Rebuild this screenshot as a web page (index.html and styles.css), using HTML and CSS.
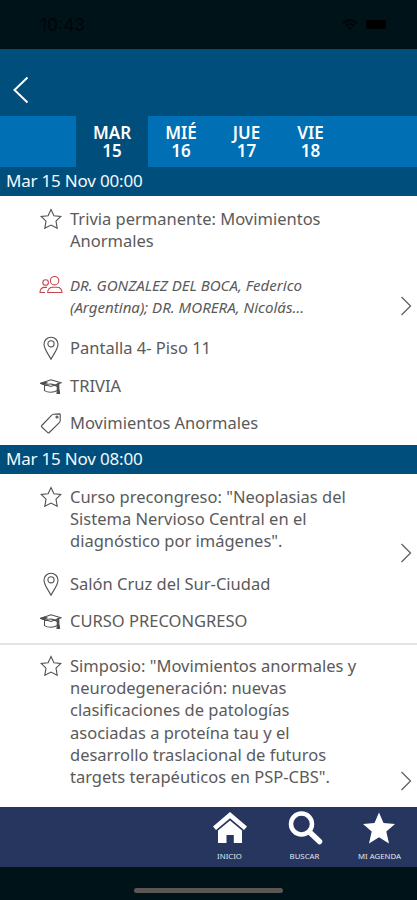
FILE: index.html
```
<!DOCTYPE html>
<html lang="es">
<head>
<meta charset="utf-8">
<title>Agenda</title>
<link rel="stylesheet" href="styles.css">
</head>
<body>
<svg class="defs" width="0" height="0" aria-hidden="true">
  <symbol id="star" viewBox="0 0 22 22"><path d="M11 1.6 13.9 7.7 20.8 8.5 16 13.2 17.2 20.2 11 17 4.8 20.2 6 13.2 1.2 8.5 8.1 7.7Z"/></symbol>
  <symbol id="pin" viewBox="0 0 22 24"><path d="M11 23.2C8.7 18.6 4 13 4 8.2a7 7 0 0 1 14 0C18 13 13.3 18.6 11 23.2Z"/><circle cx="11" cy="7.8" r="3.1"/></symbol>
  <symbol id="cap" viewBox="0 0 22 22"><path d="M.8 8.3 11 4.8 20.8 7.8 11 11.5ZM4.5 10v5.6C8 17.8 13.5 17.8 17.3 15.6V9.8M5 10.5C9 8 14 9 17 11.5"/><path class="solid" d="M1 8.3 5 7 7 8 3 9.3ZM17.8 8.5h1v5l.8 5h-2.6l.6-5Z"/></symbol>
  <symbol id="tag" viewBox="0 0 22 22"><path d="M1.800 13.500 11.500 3.300Q12.300 2.300 13.500 2.200L19.300 1.900Q20.200 1.900 20.200 2.800V8.500Q20.200 9.700 19.300 10.600L9.300 20.500Q8.400 21.300 7.500 20.400L1.800 15Q1 14.200 1.800 13.500Z"/><circle cx="17" cy="5" r="1"/></symbol>
  <symbol id="people" viewBox="0 0 24 22"><circle cx="15.6" cy="5.7" r="4.2"/><circle cx="6.600" cy="7.500" r="2.800"/><path d="M8.7 17.5C8.6 14 10.8 12.200 14 12.200h3.500c3.400 0 5.400 2 5.500 5.300ZM8 12.400H5.800C2.800 12.400 1 14 1 17.500h5"/></symbol>
</svg>
<header class="status">
  <span class="clock">10:43</span>
  <svg class="wifi" viewBox="0 0 16 12"><path d="M1 4.3Q8-2 15 4.3M3.5 7Q8 3 12.5 7"/><path class="dot" d="M5.5 8.5Q8 6.8 10.5 8.5L8 11.5Z"/></svg>
  <span class="battery"></span>
</header>
<div class="topbar"><svg class="back" viewBox="0 0 18 28"><path d="M15.500 1.500 2.500 14 15.500 26.500"/></svg></div>
<nav class="days">
  <div class="day active"><span>MAR</span><span>15</span></div>
  <div class="day mie"><span>MIÉ</span><span>16</span></div>
  <div class="day jue"><span>JUE</span><span>17</span></div>
  <div class="day vie"><span>VIE</span><span>18</span></div>
</nav>
<h2 class="date">Mar 15 Nov 00:00</h2>
<article class="item first">
  <div class="details">
    <div class="row"><svg class="icon"><use href="#star"/></svg><p>Trivia permanente: Movimientos<br>Anormales</p></div>
    <div class="row authors"><svg class="icon people"><use href="#people"/></svg><p>DR. GONZALEZ DEL BOCA, Federico<br>(Argentina); DR. MORERA, Nicolás…</p></div>
    <div class="row place"><svg class="icon pin"><use href="#pin"/></svg><p>Pantalla 4- Piso 11</p></div>
    <div class="row meta"><svg class="icon"><use href="#cap"/></svg><p>TRIVIA</p></div>
    <div class="row meta"><svg class="icon"><use href="#tag"/></svg><p>Movimientos Anormales</p></div>
  </div>
  <svg class="chevron" viewBox="0 0 12 20"><path d="M1.500 1 10.500 10 1.500 19"/></svg>
</article>
<h2 class="date">Mar 15 Nov 08:00</h2>
<article class="item second">
  <div class="details">
    <div class="row"><svg class="icon"><use href="#star"/></svg><p>Curso precongreso: "Neoplasias del<br>Sistema Nervioso Central en el<br>diagnóstico por imágenes".</p></div>
    <div class="row place"><svg class="icon pin"><use href="#pin"/></svg><p>Salón Cruz del Sur-Ciudad</p></div>
    <div class="row meta"><svg class="icon"><use href="#cap"/></svg><p>CURSO PRECONGRESO</p></div>
  </div>
  <svg class="chevron" viewBox="0 0 12 20"><path d="M1.500 1 10.500 10 1.500 19"/></svg>
</article>
<article class="item third">
  <div class="details">
    <div class="row"><svg class="icon"><use href="#star"/></svg><p>Simposio: "Movimientos anormales y<br>neurodegeneración: nuevas<br>clasificaciones de patologías<br>asociadas a proteína tau y el<br>desarrollo traslacional de futuros<br>targets terapéuticos en PSP-CBS".</p></div>
  </div>
  <svg class="chevron" viewBox="0 0 12 20"><path d="M1.500 1 10.500 10 1.500 19"/></svg>
</article>
<nav class="tabs">
  <div class="tab"><svg viewBox="0 0 36 34"><path d="M18 1 35 15.500 32 19 18 7.200 4 19 1 15.500ZM18 9.500 30 19.500V32H21.800V24H14.500V32H6V19.500Z"/></svg><span>INICIO</span></div>
  <div class="tab"><svg viewBox="0 0 36 34"><circle class="lens" cx="14.500" cy="13" r="10.500"/><path class="handle" d="M22.500 21 32.500 30.500"/></svg><span>BUSCAR</span></div>
  <div class="tab"><svg viewBox="0 0 36 34"><path d="M17 1.500 21.500 12 33 13 24.300 20.600 27 32.500 17 26.200 7 32.500 9.700 20.600 1 13 12.500 12Z"/></svg><span>MI AGENDA</span></div>
</nav>
<footer class="home"><span></span></footer>
</body>
</html>
```
FILE: styles.css
```
* { box-sizing: border-box; }
body { margin: 0; width: 417px; height: 900px; overflow: hidden; background: #fff; color: #5a5a5a; font-family: "Noto Sans", sans-serif; }
p, h2 { margin: 0; font-weight: 400; }
svg { display: block; flex: none; fill: none; }
.defs { position: absolute; }
.status { height: 49px; background: #001318; display: flex; align-items: center; padding: 0 31px 0 40px; color: #000609; }
.clock { font: 500 17px Inter, sans-serif; flex: 1; }
.wifi { width: 16px; height: 12px; stroke: #000609; stroke-width: 2; margin-right: 8px; }
.wifi .dot { fill: #000609; stroke: none; }
.battery { width: 20px; height: 9px; border-radius: 2px; background: #000; }
.topbar { height: 67px; background: #004e7b; padding: 27px 0 0 12px; }
.back { width: 18px; height: 28px; stroke: #fff; stroke-width: 2; }
.days { height: 51px; background: #006fb4; display: flex; padding-left: 76px; }
.day { display: flex; flex-direction: column; align-items: center; width: 66px; padding-top: 8px; color: #fff; font-size: 17px; font-weight: 600; line-height: 18px; }
.day.active { width: 72px; background: #004e7b; }
.day.jue { width: 65px; }
.day.vie { width: 63px; }
.date { height: 29px; background: #004e7b; color: #f4f8fb; font-size: 17px; line-height: 27px; padding-left: 6px; letter-spacing: -0.2px; }
.item { display: flex; padding-left: 40px; }
.details { flex: 1; }
.row { display: flex; font-size: 16.5px; font-weight: 300; line-height: 22.2px; gap: 8px; white-space: nowrap; }
.icon { width: 22px; height: 22px; stroke: #505050; stroke-width: 1.1; }
.solid { fill: #444; }
.pin { height: 24px; margin-top: -1px; }
.people { width: 24px; margin: 0 -1px; stroke: #c6454d; }
.authors { height: 44px; margin-top: 23px; font-size: 15.1px; line-height: 21.5px; font-style: italic; }
.chevron { width: 12px; height: 20px; stroke: #606060; stroke-width: 1.3; margin-right: 5px; }
.first { height: 249px; padding-top: 12px; }
.place { height: 22px; }
.first .place { margin-top: 17.6px; }
.meta { margin-top: 15.5px; }
.first .chevron { margin-top: 88px; }
.second { height: 171px; padding-top: 12px; border-bottom: 2px solid #e4e4e4; }
.second .place { margin-top: 20px; }
.second .chevron { margin-top: 57px; }
.third { height: 162px; padding-top: 10px; }
.third .chevron { margin-top: 116px; }
.tabs { height: 60px; background: #26365f; display: flex; justify-content: flex-end; padding-top: 4px; }
.tab { width: 75px; display: flex; flex-direction: column; align-items: center; color: #e2e5ee; font-size: 7.8px; line-height: 10px; }
.tab svg { width: 36px; height: 34px; fill: #fff; }
.tab span { margin-top: 6px; }
.tab .lens { fill: none; stroke: #fff; stroke-width: 4.5; }
.tab .handle { stroke: #fff; stroke-width: 5.5; stroke-linecap: round; }
.home { height: 33px; background: #001318; padding-top: 21px; }
.home span { display: block; width: 149px; height: 5px; border-radius: 3px; background: #5c5755; margin: 0 auto; }
```
